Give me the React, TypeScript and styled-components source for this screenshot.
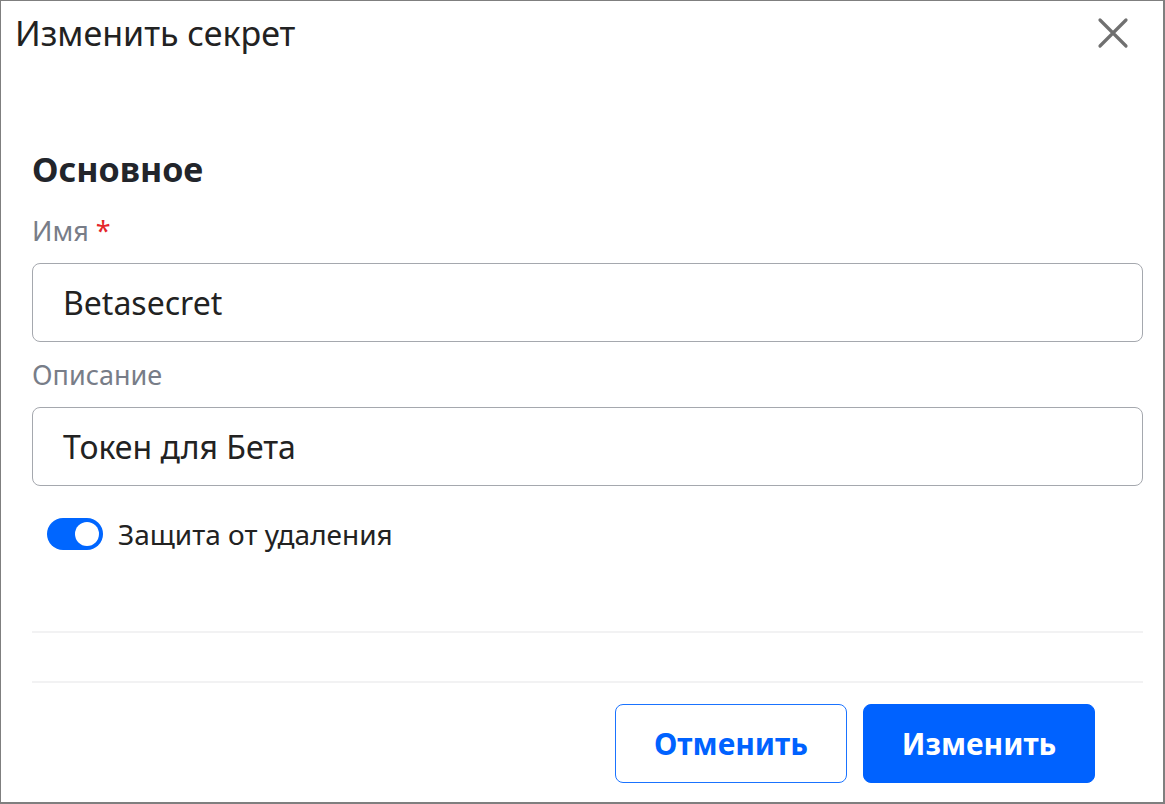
import React from "react";
import styled, { createGlobalStyle } from "styled-components";

const Global = createGlobalStyle`
  html, body { margin: 0; padding: 0; background: #fff; }
  body { font-family: "Noto Sans", "Open Sans", sans-serif; color: #222; }
  * { box-sizing: border-box; }
`;

const Dialog = styled.div`
  width: 1165px;
  height: 804px;
  border: 1px solid #7f7f7f;
  border-right-width: 2px;
  border-bottom-width: 2px;
  display: flex;
  flex-direction: column;
  background: #fff;
`;

const Header = styled.div`
  display: flex;
  align-items: center;
  justify-content: space-between;
  padding: 0 34px 0 14px;
  height: 64px;
`;

const Title = styled.h1`
  margin: 0;
  font-size: 34px;
  line-height: 40px;
  font-weight: 400;
  color: #222;
`;

const CloseButton = styled.button`
  border: none;
  background: none;
  padding: 0;
  width: 32px;
  height: 32px;
  display: flex;
  align-items: center;
  justify-content: center;
  cursor: pointer;
`;

const Body = styled.div`
  padding: 84px 20px 0 31px;
  display: flex;
  flex-direction: column;
`;

const SectionTitle = styled.h2`
  margin: 0 0 26px;
  font-size: 34px;
  font-weight: 700;
  color: #22252b;
  line-height: 40px;
`;

const Label = styled.div<{ $top: number }>`
  font-size: 27px;
  color: #787d88;
  line-height: 32px;
  margin-top: ${(p) => p.$top}px;
  margin-bottom: 16px;
`;

const Required = styled.span`
  color: #e5262a;
`;

const Input = styled.div`
  height: 79px;
  border: 1px solid #a5a8ae;
  border-radius: 8px;
  padding: 0 30px;
  display: flex;
  align-items: center;
  font-size: 32px;
  color: #222;
`;

const ToggleRow = styled.div`
  display: flex;
  align-items: center;
  gap: 15px;
  padding-left: 15px;
  margin-top: 32px;
  font-size: 28px;
  line-height: 32px;
  color: #222;
`;

const Track = styled.div<{ $on: boolean }>`
  width: 56px;
  height: 32px;
  border-radius: 16px;
  background: ${(p) => (p.$on ? "#0066ff" : "#ccc")};
  position: relative;
`;

const Knob = styled.div<{ $on: boolean }>`
  position: absolute;
  top: 4px;
  left: ${(p) => (p.$on ? "28px" : "4px")};
  width: 24px;
  height: 24px;
  border-radius: 50%;
  background: #fff;
`;

const Divider = styled.div<{ $top: number }>`
  height: 2px;
  background: #f2f2f3;
  margin-top: ${(p) => p.$top}px;
`;

const Footer = styled.div`
  display: flex;
  justify-content: flex-end;
  gap: 16px;
  padding: 21px 68px 0 0;
`;

const Button = styled.button<{ $primary?: boolean }>`
  width: 232px;
  height: 79px;
  border-radius: 8px;
  font-family: inherit;
  font-size: 30px;
  font-weight: 700;
  cursor: pointer;
  border: 1px solid ${(p) => (p.$primary ? "#0062ff" : "#1a73ff")};
  background: ${(p) => (p.$primary ? "#0062ff" : "#fff")};
  color: ${(p) => (p.$primary ? "#fff" : "#0062ff")};
`;

export default function App() {
  return (
    <>
      <Global />
      <Dialog>
        <Header>
          <Title>Изменить секрет</Title>
          <CloseButton aria-label="close">
            <svg width="32" height="32" viewBox="0 0 32 32">
              <path d="M3 3 L29 29 M29 3 L3 29" stroke="#707070" strokeWidth="3.2" strokeLinecap="round" />
            </svg>
          </CloseButton>
        </Header>
        <Body>
          <SectionTitle>Основное</SectionTitle>
          <Label $top={0}>
            Имя <Required>*</Required>
          </Label>
          <Input>Betasecret</Input>
          <Label $top={17}>Описание</Label>
          <Input>Токен для Бета</Input>
          <ToggleRow>
            <Track $on>
              <Knob $on />
            </Track>
            Защита от удаления
          </ToggleRow>
          <Divider $top={81} />
          <Divider $top={48} />
        </Body>
        <Footer>
          <Button>Отменить</Button>
          <Button $primary>Изменить</Button>
        </Footer>
      </Dialog>
    </>
  );
}
